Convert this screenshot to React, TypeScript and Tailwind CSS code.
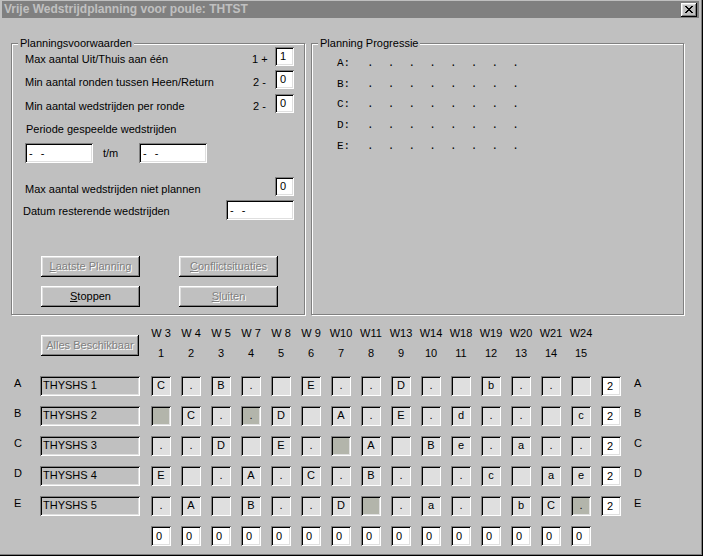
import React from "react";

// Win95-stijl randen
const raised =
  "shadow-[inset_-1px_-1px_0_#000,inset_1px_1px_0_#fff,inset_-2px_-2px_0_#808080,inset_2px_2px_0_#dfdfdf]";
const sunken =
  "shadow-[inset_1px_1px_0_#808080,inset_-1px_-1px_0_#fff,inset_2px_2px_0_#000,inset_-2px_-2px_0_#dfdfdf]";
const etched = "border border-[#808080] shadow-[inset_1px_1px_0_#fff,1px_1px_0_#fff]";
const grayText = "text-[#808080] [text-shadow:1px_1px_0_#fff]";

const WEEKS = ["W 3", "W 4", "W 5", "W 7", "W 8", "W 9", "W10", "W11", "W13", "W14", "W18", "W19", "W20", "W21", "W24"];
const TEAMS = ["A", "B", "C", "D", "E"];
const NAMES = ["THYSHS 1", "THYSHS 2", "THYSHS 3", "THYSHS 4", "THYSHS 5"];

// "#" = niet beschikbaar
const GRID: string[][] = [
  ["C", ".", "B", ".", "", "E", ".", ".", "D", ".", "", "b", ".", ".", ""],
  ["#", "C", ".", "#.", "D", "", "A", ".", "E", ".", "d", ".", ".", "", "c"],
  [".", ".", "D", "", "E", ".", "#", "A", "", "B", "e", ".", "a", ".", "."],
  ["E", "", ".", "A", ".", "C", ".", "B", ".", "", ".", "c", "", "a", "e"],
  [".", "A", "", "B", ".", ".", "D", "#", ".", "a", ".", "", "b", "C", "#."],
];

function Btn({ children, disabled, className = "" }: { children: React.ReactNode; disabled?: boolean; className?: string }) {
  return (
    <button
      type="button"
      className={`${raised} flex h-[21px] w-[99px] items-center justify-center bg-[#c0c0c0] ${disabled ? grayText : ""} ${className}`}
    >
      {children}
    </button>
  );
}

function Box({ w, value }: { w: string; value: string }) {
  return (
    <div className={`${sunken} ${w} flex h-[19px] shrink-0 items-center bg-white pl-[5px]`}>{value}</div>
  );
}

function DateBox() {
  return (
    <div className={`${sunken} flex h-[20px] w-[68px] shrink-0 items-center bg-white pl-[4px]`}>
      <span>-</span>
      <span className="ml-[8px]">-</span>
    </div>
  );
}

export default function App() {
  return (
    <div className="h-[556px] w-[703px] overflow-hidden bg-[#c0c0c0] pt-[1px] font-['Liberation_Sans',Arial,sans-serif] text-[11px] leading-[13px] text-black shadow-[inset_-1px_-1px_0_#000,inset_-2px_-2px_0_#808080]">
      {/* titelbalk */}
      <div className="ml-[2px] flex h-[17px] w-[697px] items-center justify-between bg-[#808080] pl-[2px] pr-[2px]">
        <span className="text-[12px] font-bold text-[#c0c0c0]">Vrije Wedstrijdplanning voor poule: THTST</span>
        <div className={`${raised} flex h-[14px] w-[16px] items-center justify-center bg-[#c0c0c0]`}>
          <svg width="8" height="7" viewBox="0 0 8 7" shapeRendering="crispEdges">
            <path
              fill="#000"
              d="M0 0h2v1H0z M6 0h2v1H6z M1 1h2v1H1z M5 1h2v1H5z M2 2h4v1H2z M3 3h2v1H3z M2 4h4v1H2z M1 5h2v1H1z M5 5h2v1H5z M0 6h2v1H0z M6 6h2v1H6z"
            />
          </svg>
        </div>
      </div>

      {/* bovenste groepen */}
      <div className="ml-[11px] mt-[25px] flex gap-[6px]">
        <div className={`${etched} relative flex h-[272px] w-[294px] flex-col pl-[13px] pr-[10px]`}>
          <span className="absolute left-[6px] top-[-7px] bg-[#c0c0c0] px-[2px]">Planningsvoorwaarden</span>

          <div className="mt-[3px] flex h-[19px] items-center">
            <span className="flex-1 pt-[5px]">Max aantal Uit/Thuis aan één</span>
            <span className="w-[23px] pt-[5px]">1 +</span>
            <Box w="w-[19px]" value="1" />
          </div>
          <div className="mt-[4px] flex h-[19px] items-center">
            <span className="flex-1 pt-[5px]">Min aantal ronden tussen Heen/Return</span>
            <span className="w-[22px] pt-[5px]">2 -</span>
            <Box w="w-[19px]" value="0" />
          </div>
          <div className="mt-[5px] flex h-[19px] items-center">
            <span className="flex-1 pt-[5px]">Min aantal wedstrijden per ronde</span>
            <span className="w-[22px] pt-[5px]">2 -</span>
            <Box w="w-[19px]" value="0" />
          </div>

          <div className="ml-[1px] mt-[10px]">Periode gespeelde wedstrijden</div>
          <div className="mt-[7px] flex items-center">
            <DateBox />
            <span className="ml-[10px] w-[36px]">t/m</span>
            <DateBox />
          </div>

          <div className="mt-[14px] flex h-[19px] items-center">
            <span className="flex-1 pt-[6px]">Max aantal wedstrijden niet plannen</span>
            <Box w="w-[19px]" value="0" />
          </div>
          <div className="mt-[4px] flex h-[20px] items-center">
            <span className="-ml-[2px] flex-1 pt-[3px]">Datum resterende wedstrijden</span>
            <DateBox />
          </div>

          <div className="ml-[16px] mt-[36px] flex gap-[39px]">
            <Btn disabled>
              <span className="underline">L</span>aatste Planning
            </Btn>
            <Btn disabled>
              <span className="underline">C</span>onflictsituaties
            </Btn>
          </div>
          <div className="ml-[16px] mt-[9px] flex gap-[39px]">
            <Btn>
              <span className="underline">S</span>toppen
            </Btn>
            <Btn disabled>
              <span className="underline">S</span>luiten
            </Btn>
          </div>
        </div>

        <div className={`${etched} relative flex h-[272px] w-[373px] flex-col pl-[25px] pt-[9px]`}>
          <span className="absolute left-[6px] top-[-7px] bg-[#c0c0c0] px-[2px]">Planning Progressie</span>
          {TEAMS.map((t) => (
            <div key={t} className="flex h-[20.75px] items-center font-['Liberation_Mono',monospace] text-[11px]">
              <span className="w-[30px]">{t}:</span>
              {Array.from({ length: 8 }).map((_, i) => (
                <span key={i} className="w-[20.75px]">
                  .
                </span>
              ))}
            </div>
          ))}
        </div>
      </div>

      {/* kop speelrondes */}
      <div className="mt-[8px] flex">
        <div className="w-[146px] pl-[41px] pt-[12px]">
          <button type="button" className={`${raised} flex h-[21px] w-[98px] items-center justify-center bg-[#c0c0c0] ${grayText}`}>
            Alles Beschikbaar
          </button>
        </div>
        {WEEKS.map((w, i) => (
          <div key={w} className="flex w-[30px] flex-col">
            <span className="flex h-[20px] items-center justify-center whitespace-pre">{w}</span>
            <span className="flex h-[20px] items-center justify-center">{i + 1}</span>
          </div>
        ))}
      </div>

      {/* teams */}
      <div className="mt-[13px] flex flex-col gap-[10px]">
        {TEAMS.map((t, r) => (
          <div key={t} className="flex h-[20px] items-center">
            <span className="mb-[6px] w-[40px] pl-[14px]">{t}</span>
            <div className={`${sunken} flex h-[20px] w-[100px] items-center bg-[#c0c0c0] pb-[2px] pl-[3px]`}>
              {NAMES[r]}
            </div>
            <div className="ml-[11px] flex gap-[10px]">
              {GRID[r].map((c, i) => {
                const off = c.startsWith("#");
                const v = off ? c.slice(1) : c;
                return (
                  <div
                    key={i}
                    className={`${sunken} flex h-[20px] w-[20px] items-center justify-center pb-[2px] ${off ? "bg-[#b3b5ab]" : "bg-[#dfdfdf]"}`}
                  >
                    {v}
                  </div>
                );
              })}
              <div className={`${sunken} flex h-[20px] w-[20px] items-center bg-white pl-[6px]`}>2</div>
            </div>
            <span className="mb-[6px] ml-[13px]">{t}</span>
          </div>
        ))}
        <div className="flex h-[20px]">
          <div className="w-[151px]" />
          <div className="flex gap-[10px]">
            {WEEKS.map((w) => (
              <div key={w} className={`${sunken} flex h-[20px] w-[20px] items-center bg-white pl-[5px]`}>
                0
              </div>
            ))}
          </div>
        </div>
      </div>
    </div>
  );
}
